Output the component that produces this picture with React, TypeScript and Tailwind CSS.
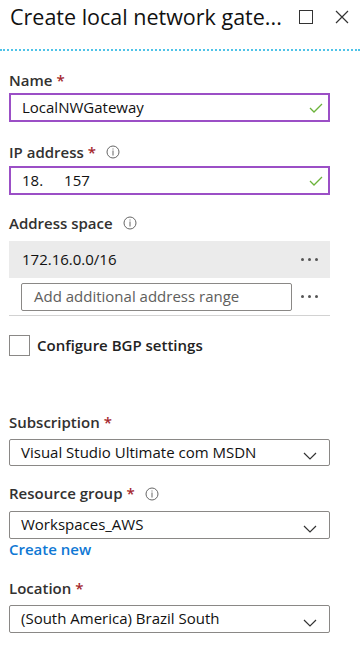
import React from "react";

const font = { fontFamily: '"Open Sans", "Noto Sans", Arial, sans-serif' };

function Info() {
  return (
    <svg width="14" height="14" viewBox="0 0 14 14" className="ml-[10px]">
      <circle cx="7" cy="7" r="6" fill="none" stroke="#666" strokeWidth="1" />
      <rect x="6.5" y="3.5" width="1" height="1" fill="#666" />
      <rect x="6.5" y="5.5" width="1" height="5" fill="#666" />
    </svg>
  );
}

function Check() {
  return (
    <svg width="14" height="10" viewBox="0 0 14 10">
      <path d="M1 5 L5 9 L13 1" fill="none" stroke="#6bb33a" strokeWidth="1.3" />
    </svg>
  );
}

function Chevron() {
  return (
    <svg width="14" height="8" viewBox="0 0 14 8">
      <path d="M1 1 L7 7 L13 1" fill="none" stroke="#333" strokeWidth="1.2" />
    </svg>
  );
}

function Dots() {
  return (
    <div className="flex gap-[4px] items-center">
      <span className="w-[3px] h-[3px] rounded-full bg-[#555]" />
      <span className="w-[3px] h-[3px] rounded-full bg-[#555]" />
      <span className="w-[3px] h-[3px] rounded-full bg-[#555]" />
    </div>
  );
}

function Label({ text, req, info, className }: { text: string; req?: boolean; info?: boolean; className?: string }) {
  return (
    <div className={"flex items-center h-[20px] text-[15px] font-semibold text-[#323130] " + (className || "")}>
      <span>{text}</span>
      {req && <span className="text-[#a4262c] ml-[4px]">*</span>}
      {info && <Info />}
    </div>
  );
}

function Select({ value, className }: { value: string; className?: string }) {
  return (
    <div className={"flex items-center justify-between border border-[#8a8886] rounded-[2px] pl-[11px] pr-[12px] text-[15px] text-[#111] " + (className || "")}>
      <span>{value}</span>
      <span className="mt-[8px]"><Chevron /></span>
    </div>
  );
}

export default function App() {
  return (
    <div className="w-[360px] h-[648px] bg-white overflow-hidden" style={font}>
      <div className="flex justify-between items-start h-[49px] pl-[10px] pr-[10px] pt-[2px]">
        <div className="text-[21.5px] text-[#111] leading-[30px]">Create local network gate...</div>
        <div className="flex items-center gap-[22px] pt-[8px] pr-[1px]">
          <div className="w-[14px] h-[14px] border border-[#333]" />
          <svg width="14" height="14" viewBox="0 0 14 14">
            <path d="M1 1 L13 13 M13 1 L1 13" stroke="#333" strokeWidth="1.2" />
          </svg>
        </div>
      </div>
      <div className="border-t-2 border-dotted border-[#4fc3e8]" />

      <div className="px-[9px] w-[339px]">
        <Label text="Name" req className="mt-[19px]" />
        <div className="mt-[3px] h-[29px] border-2 border-[#9b4fc6] flex items-center justify-between pl-[11px] pr-[5px] text-[15px] text-[#111]">
          <span>LocalNWGateway</span>
          <Check />
        </div>

        <Label text="IP address" req info className="mt-[20px]" />
        <div className="mt-[4px] h-[29px] border-2 border-[#9b4fc6] flex items-center justify-between pl-[11px] pr-[5px] text-[15px] text-[#111]">
          <span>
            18.<span className="inline-block w-[21px]" />157
          </span>
          <Check />
        </div>

        <Label text="Address space" info className="mt-[18px]" />
        <div className="mt-[8px] h-[37px] bg-[#ebebeb] flex items-center justify-between pl-[13px] pr-[12px] text-[15px] text-[#111]">
          <span>172.16.0.0/16</span>
          <Dots />
        </div>
        <div className="flex items-center h-[38px] border-b border-[#d2d2d2] pl-[12px] pr-[12px] justify-between">
          <div className="w-[271px] h-[28px] border border-[#8a8886] rounded-[2px] flex items-center pl-[12px] text-[15px] text-[#605e5c]">
            Add additional address range
          </div>
          <Dots />
        </div>

        <div className="flex items-center mt-[18px]">
          <div className="w-[21px] h-[21px] border border-[#8a8886]" />
          <span className="ml-[7px] text-[15px] font-semibold text-[#222]">Configure BGP settings</span>
        </div>

        <Label text="Subscription" req className="mt-[56px]" />
        <Select value="Visual Studio Ultimate com MSDN" className="mt-[6px] h-[27px]" />

        <Label text="Resource group" req info className="mt-[18px]" />
        <Select value="Workspaces_AWS" className="mt-[7px] h-[28px]" />
        <div className="mt-[1px] h-[20px] flex items-center text-[15px] font-semibold text-[#0f78d4]">Create new</div>

        <Label text="Location" req className="mt-[19px]" />
        <Select value="(South America) Brazil South" className="mt-[6px] h-[28px]" />
      </div>
    </div>
  );
}
